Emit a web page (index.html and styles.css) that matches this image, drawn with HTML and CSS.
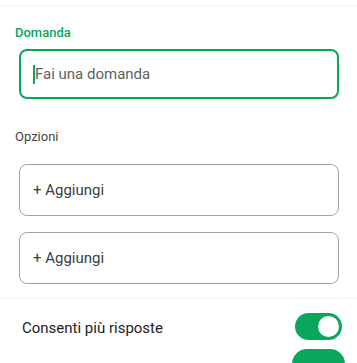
FILE: index.html
```html
<!DOCTYPE html>
<html lang="it">
<head>
<meta charset="utf-8">
<title>Sondaggio</title>
<link rel="stylesheet" href="styles.css">
</head>
<body>
<div class="topbar"></div>
<main class="form">
  <div class="field-label active">Domanda</div>
  <div class="box input focused"><span class="caret"></span><span class="placeholder">Fai una domanda</span></div>
  <div class="field-label section">Opzioni</div>
  <div class="options">
    <div class="box option">+ Aggiungi</div>
    <div class="box option">+ Aggiungi</div>
  </div>
</main>
<div class="divider"></div>
<div class="setting-row">
  <span class="setting-text">Consenti più risposte</span>
  <span class="switch on"><span class="knob"></span></span>
</div>
<div class="setting-row next">
  <span class="switch-big"></span>
</div>
</body>
</html>
```
FILE: styles.css
```css
html, body {
  margin: 0;
  padding: 0;
  background: #ffffff;
  font-family: Roboto, "Noto Sans", "Liberation Sans", sans-serif;
  overflow: hidden;
}
.topbar {
  height: 5px;
  border-bottom: 1px solid #f2f2f2;
}
.form {
  padding: 17px 18px 0 15px;
}
.field-label {
  font-size: 13px;
  line-height: 20px;
  color: #444444;
}
.field-label.active {
  color: #0aa65b;
  font-weight: 500;
}
.field-label.section {
  margin-top: 28px;
}
.box {
  box-sizing: border-box;
  margin-left: 4px;
  border-radius: 8px;
  display: flex;
  align-items: center;
  font-size: 15px;
}
.input {
  margin-top: 6px;
  height: 50px;
  border: 2px solid #0aa65b;
  padding-left: 12px;
  color: #5f5f5f;
}
.caret {
  width: 2px;
  height: 19px;
  background: #0aa65b;
}
.options {
  margin-top: 17px;
  display: flex;
  flex-direction: column;
  gap: 16px;
}
.option {
  height: 52px;
  border: 1px solid #a3a3a3;
  padding-left: 13px;
  color: #3c3c3c;
}
.divider {
  margin-top: 14px;
  height: 1px;
  background: #f3f3f3;
}
.setting-row {
  display: flex;
  justify-content: space-between;
  align-items: flex-start;
  padding: 14px 15px 0 22px;
}
.setting-text {
  font-size: 15px;
  line-height: 27px;
  margin-top: 2px;
  color: #222222;
}
.switch {
  width: 47px;
  height: 27px;
  border-radius: 14px;
  background: #0aa65b;
  display: flex;
  align-items: center;
  justify-content: flex-end;
  padding-right: 3px;
  box-sizing: border-box;
}
.knob {
  width: 21px;
  height: 21px;
  border-radius: 50%;
  background: #ffffff;
}
.setting-row.next {
  padding: 7px 12px 0 0;
  justify-content: flex-end;
}
.switch-big {
  width: 53px;
  height: 30px;
  border-radius: 15px 15px 0 0;
  background: #0aa65b;
}
```
